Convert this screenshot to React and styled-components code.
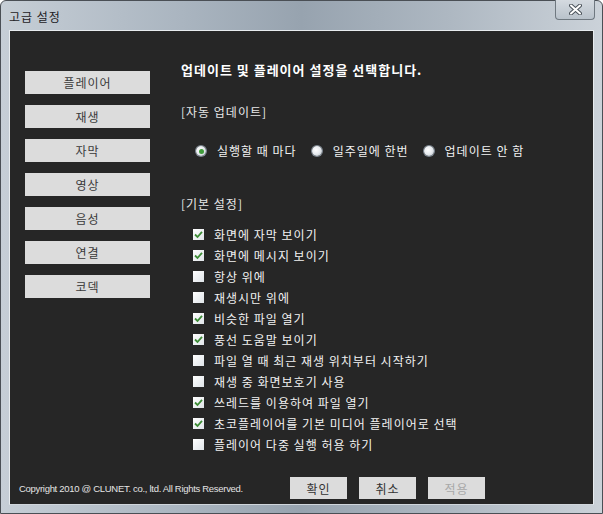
import styled, { createGlobalStyle } from "styled-components";

const Global = createGlobalStyle`
html, body { margin: 0; padding: 0; background: #ffffff; }
body { font-family: "Noto Sans CJK KR", "Noto Sans", sans-serif; }
`

const Frame = styled.div`
width: 603px;
height: 514px;
box-sizing: border-box;
display: flex;
flex-direction: column;
border: 1px solid #4a4f55;
border-radius: 6px 6px 0 0;
background: linear-gradient(90deg, #c6ced6 0%, #aab5c0 30%, #97a3af 50%, #aeb8c2 75%, #cbd2d9 100%);
padding: 0 8px 8px 8px;
`

const TitleBar = styled.div`
height: 29px;
display: flex;
justify-content: space-between;
align-items: flex-start;
`

const Title = styled.div`
font-size: 12px;
color: #1e2226;
line-height: 14px;
padding-top: 9px;
letter-spacing: 1px;
`

const CloseButton = styled.div`
width: 40px;
height: 20px;
margin-top: -1px;
margin-right: -1px;
box-sizing: border-box;
border: 1px solid #6f7880;
border-top: none;
border-radius: 0 0 4px 4px;
background: linear-gradient(180deg, #d4dae0, #b9c2cb);
display: flex;
align-items: center;
justify-content: center;
`

const Panel = styled.div`
flex: 1;
display: flex;
flex-direction: column;
background: #262626;
border: 1px solid #e7ebee;
border-bottom-color: #d0d6dc;
`

const Body = styled.div`
flex: 1;
display: flex;
gap: 31px;
`

const SideMenu = styled.div`
width: 125px;
padding: 40px 0 0 15px;
display: flex;
flex-direction: column;
gap: 11px;
`

const MenuButton = styled.div`
height: 23px;
background: #dcdcdc;
color: #3a3a3a;
font-size: 12px;
letter-spacing: 1px;
display: flex;
align-items: center;
justify-content: center;
`

const Main = styled.div`
padding-top: 31px;
display: flex;
flex-direction: column;
color: #f2f2f2;
font-size: 12px;
letter-spacing: 1px;
`

const Heading = styled.div`
font-weight: bold;
font-size: 13px;
line-height: 16px;
color: #ffffff;
`

const Section = styled.div`
line-height: 16px;
margin-top: ${p => p.gap}px;
color: #e8e8e8;
`

const RadioRow = styled.div`
display: flex;
align-items: center;
margin-top: 23px;
padding-left: 15px;
line-height: 16px;
`

const RadioItem = styled.label`
display: flex;
align-items: center;
margin-right: 15px;
`

const Radio = styled.span`
width: 10px;
height: 10px;
border-radius: 50%;
margin-right: 11px;
background: radial-gradient(circle at 40% 40%, #ffffff 0%, #e6eaee 50%, #a8b2bc 100%);
box-shadow: 0 0 0 1px #7c8690;
display: flex;
align-items: center;
justify-content: center;
&::after {
  content: "";
  width: 5px;
  height: 5px;
  border-radius: 50%;
  background: ${p => (p.checked ? "#3f9b3a" : "transparent")};
}
`

const CheckList = styled.div`
margin-top: 12px;
padding-left: 12px;
display: flex;
flex-direction: column;
`

const CheckRow = styled.div`
height: 21px;
display: flex;
align-items: center;
`

const Box = styled.span`
width: 11px;
height: 11px;
margin-right: 10px;
background: linear-gradient(135deg, #ffffff, #dfe4e8);
display: flex;
align-items: center;
justify-content: center;
`

const Footer = styled.div`
height: 43px;
box-sizing: border-box;
display: flex;
align-items: center;
padding: 16px 108px 5px 9px;
`

const Copyright = styled.div`
font-family: "Liberation Sans", Arial, sans-serif;
font-size: 9.5px;
letter-spacing: -0.3px;
color: #e4e4e4;
`

const Buttons = styled.div`
margin-left: auto;
display: flex;
gap: 12px;
`

const DialogButton = styled.div`
width: 57px;
height: 22px;
background: #dcdcdc;
color: ${p => (p.disabled ? "#a8a8a8" : "#333333")};
font-size: 12px;
letter-spacing: 1px;
display: flex;
align-items: center;
justify-content: center;
`

const menu = ["플레이어", "재생", "자막", "영상", "음성", "연결", "코덱"];

const options = [
  ["화면에 자막 보이기", true],
  ["화면에 메시지 보이기", true],
  ["항상 위에", false],
  ["재생시만 위에", false],
  ["비슷한 파일 열기", true],
  ["풍선 도움말 보이기", true],
  ["파일 열 때 최근 재생 위치부터 시작하기", false],
  ["재생 중 화면보호기 사용", false],
  ["쓰레드를 이용하여 파일 열기", true],
  ["초코플레이어를 기본 미디어 플레이어로 선택", true],
  ["플레이어 다중 실행 허용 하기", false],
];

const radios = [
  ["실행할 때 마다", true],
  ["일주일에 한번", false],
  ["업데이트 안 함", false],
];

const Check = () => (
  <svg width="9" height="9" viewBox="0 0 9 9">
    <path d="M1 4.5 L3.5 7 L8 1.8" fill="none" stroke="#3d8c36" strokeWidth="1.8" />
  </svg>
);

const App = () => {
  return (
    <Frame>
      <Global />
      <TitleBar>
        <Title>고급 설정</Title>
        <CloseButton>
          <svg width="13" height="11" viewBox="0 0 13 11">
            <path d="M2 1.5 L11 9.5 M11 1.5 L2 9.5" stroke="#4a525a" strokeWidth="4" strokeLinecap="round" />
            <path d="M2 1.5 L11 9.5 M11 1.5 L2 9.5" stroke="#ffffff" strokeWidth="2" strokeLinecap="round" />
          </svg>
        </CloseButton>
      </TitleBar>
      <Panel>
        <Body>
          <SideMenu>
            {menu.map(m => <MenuButton key={m}>{m}</MenuButton>)}
          </SideMenu>
          <Main>
            <Heading>업데이트 및 플레이어 설정을 선택합니다.</Heading>
            <Section gap={26}>[자동 업데이트]</Section>
            <RadioRow>
              {radios.map(([t, c]) => (
                <RadioItem key={t}><Radio checked={c} />{t}</RadioItem>
              ))}
            </RadioRow>
            <Section gap={37}>[기본 설정]</Section>
            <CheckList>
              {options.map(([t, c]) => (
                <CheckRow key={t}><Box>{c && <Check />}</Box>{t}</CheckRow>
              ))}
            </CheckList>
          </Main>
        </Body>
        <Footer>
          <Copyright>Copyright 2010 @ CLUNET. co., ltd. All Rights Reserved.</Copyright>
          <Buttons>
            <DialogButton>확인</DialogButton>
            <DialogButton>취소</DialogButton>
            <DialogButton disabled>적용</DialogButton>
          </Buttons>
        </Footer>
      </Panel>
    </Frame>
  );
};

export default App;
